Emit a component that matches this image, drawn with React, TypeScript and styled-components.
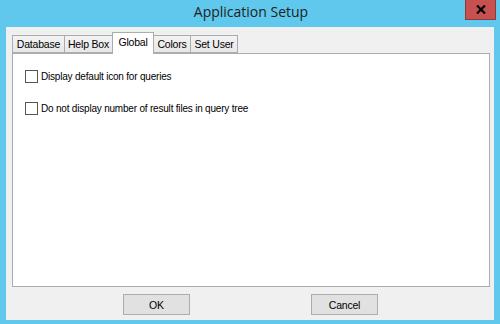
import styled, { createGlobalStyle } from 'styled-components';

const GlobalStyle = createGlobalStyle`
  html, body {
    margin: 0;
    padding: 0;
    background: #5fc8ec;
  }
`;

type TabProps = { $active?: boolean; $w: number };

const tabs = [
  { label: 'Database', w: 53 },
  { label: 'Help Box', w: 49 },
  { label: 'Global', w: 42 },
  { label: 'Colors', w: 38 },
  { label: 'Set User', w: 48 },
];

const options = [
  'Display default icon for queries',
  'Do not display number of result files in query tree',
];

const App = () => {
  return (
    <>
      <GlobalStyle />
      <Window>
        <TitleBar>
          <span />
          <Title>Application Setup</Title>
          <CloseButton aria-label="Close">
            <svg width="10" height="9" viewBox="0 0 10 9">
              <path d="M1 0.5 L9 8.5 M9 0.5 L1 8.5" stroke="#000" strokeWidth="2.2" />
            </svg>
          </CloseButton>
        </TitleBar>
        <Client>
          <TabRow>
            {tabs.map((t) => (
              <Tab key={t.label} $w={t.w} $active={t.label === 'Global'}>
                {t.label}
              </Tab>
            ))}
          </TabRow>
          <Panel>
            {options.map((o) => (
              <Option key={o}>
                <CheckBox />
                <span>{o}</span>
              </Option>
            ))}
          </Panel>
          <Footer>
            <Button>OK</Button>
            <Button>Cancel</Button>
          </Footer>
        </Client>
      </Window>
    </>
  );
};

export default App;

const Window = styled.div`
  width: 500px;
  height: 324px;
  box-sizing: border-box;
  background: #5fc8ec;
  padding: 0 6px 4px 6px;
  display: flex;
  flex-direction: column;
`;

const TitleBar = styled.div`
  height: 27px;
  display: grid;
  grid-template-columns: 1fr auto 1fr;
  align-items: start;
  margin-right: -2px;
`;

const Title = styled.div`
  font-family: 'Open Sans', 'Noto Sans', sans-serif;
  font-size: 14px;
  color: #1e1e1e;
  line-height: 24px;
`;

const CloseButton = styled.div`
  justify-self: end;
  width: 29px;
  height: 19px;
  background: #c75050;
  border: 1px solid #8f3a3a;
  border-top: none;
  display: flex;
  align-items: center;
  justify-content: center;
`;

const Client = styled.div`
  flex: 1;
  background: #f0f0f0;
  padding: 5px 4px 0 6px;
  display: flex;
  flex-direction: column;
  font-family: 'Liberation Sans', Arial, sans-serif;
  font-size: 10px;
  letter-spacing: -0.2px;
  color: #000;
`;

const TabRow = styled.div`
  display: flex;
  align-items: flex-end;
  height: 21px;
  padding-left: 1px;
  position: relative;
  z-index: 1;
`;

const Tab = styled.div<TabProps>`
  box-sizing: border-box;
  width: ${(p) => p.$w}px;
  height: ${(p) => (p.$active ? 22 : 18)}px;
  margin-left: -1px;
  margin-bottom: ${(p) => (p.$active ? -1 : 0)}px;
  border: 1px solid #acacac;
  border-bottom: ${(p) => (p.$active ? 'none' : '1px solid #acacac')};
  background: ${(p) => (p.$active ? '#fff' : 'linear-gradient(#f3f3f3, #e8e8e8)')};
  display: flex;
  align-items: ${(p) => (p.$active ? 'flex-start' : 'center')};
  padding-top: ${(p) => (p.$active ? 3 : 0)}px;
  justify-content: center;
  white-space: nowrap;
  font-size: 10.5px;
`;

const Panel = styled.div`
  height: 234px;
  box-sizing: border-box;
  background: #fff;
  border: 1px solid #acacac;
  padding: 16px 0 0 12px;
  display: flex;
  flex-direction: column;
  gap: 19px;
`;

const Option = styled.label`
  display: flex;
  align-items: center;
  gap: 3px;
  height: 13px;
`;

const CheckBox = styled.span`
  box-sizing: border-box;
  width: 13px;
  height: 13px;
  border: 1px solid #555;
  background: #fff;
`;

const Footer = styled.div`
  display: flex;
  padding: 7px 0 0 111px;
  gap: 121px;
`;

const Button = styled.div`
  box-sizing: border-box;
  width: 67px;
  height: 21px;
  background: #e1e1e1;
  border: 1px solid #adadad;
  display: flex;
  align-items: center;
  justify-content: center;
  font-size: 10.5px;
`;
